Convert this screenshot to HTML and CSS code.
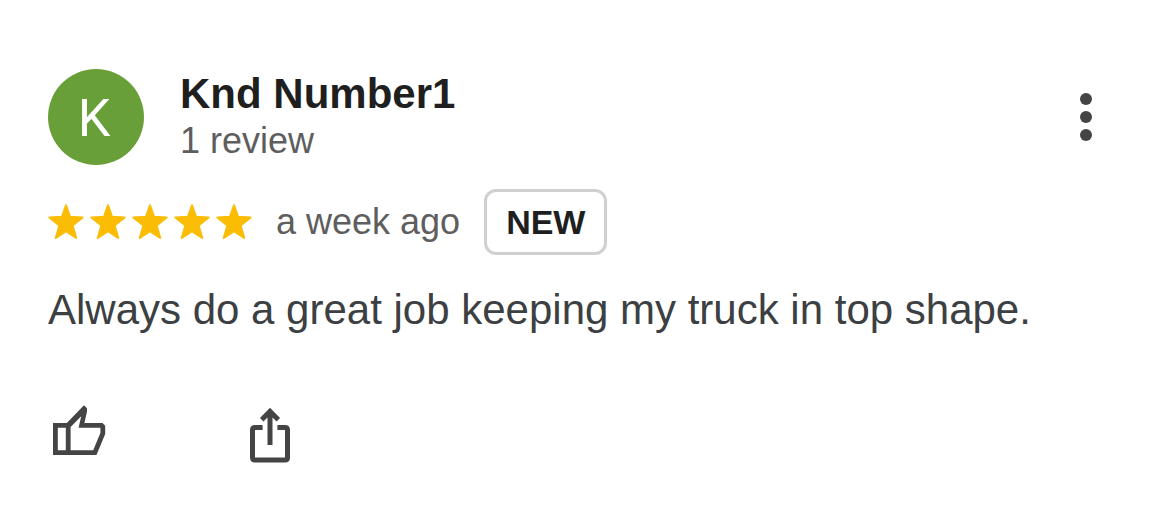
FILE: index.html
```html
<!DOCTYPE html>
<html lang="en">
<head>
<meta charset="utf-8">
<meta name="viewport" content="width=device-width, initial-scale=1">
<title>Review</title>
<link rel="stylesheet" href="styles.css">
</head>
<body>
<svg class="defs" aria-hidden="true">
  <symbol id="star" viewBox="0 0 36 36">
    <path d="M18 1.3 22 12.7 34.6 13.4 24.6 21.5 28.2 33.9 18 27.2 7.8 33.9 11.4 21.5 1.4 13.4 14 12.7Z" fill="currentColor" stroke="currentColor" stroke-width="2" stroke-linejoin="round"/>
  </symbol>
</svg>
<article class="review">
  <header class="review-header">
    <div class="avatar" aria-hidden="true">K</div>
    <div class="author">
      <h1 class="author-name">Knd Number1</h1>
      <p class="author-meta">1 review</p>
    </div>
    <button class="icon-button menu-button" type="button" aria-label="More options">
      <svg class="menu-icon" viewBox="0 0 12 48" fill="currentColor"><circle cx="6" cy="6" r="6"/><circle cx="6" cy="24" r="6"/><circle cx="6" cy="42" r="6"/></svg>
    </button>
  </header>
  <div class="rating-row">
    <div class="stars" role="img" aria-label="5 out of 5 stars">
      <svg class="star"><use href="#star"/></svg>
      <svg class="star"><use href="#star"/></svg>
      <svg class="star"><use href="#star"/></svg>
      <svg class="star"><use href="#star"/></svg>
      <svg class="star"><use href="#star"/></svg>
    </div>
    <span class="date">a week ago</span>
    <span class="badge">NEW</span>
  </div>
  <p class="review-text">Always do a great job keeping my truck in top shape.</p>
  <div class="actions">
    <button class="icon-button" type="button" aria-label="Like">
      <svg class="action-icon" viewBox="0 0 60 64"><path fill="currentColor" stroke="none" fill-rule="evenodd" d="M5 22H18.8L36 4.2 39 7.2V10.5L36.4 22H54.5L57.2 24.7V33L48.5 54H5ZM9.8 26.8V49.2H17.8V26.8ZM22.6 26V49.2H45.2L52.4 32V26.8H30.6L33.2 15.2Z"/></svg>
    </button>
    <button class="icon-button" type="button" aria-label="Share">
      <svg class="action-icon" viewBox="0 0 60 64"><path d="M22.6 26.5H15Q12.5 26.5 12.5 29V56.5Q12.5 59 15 59H45Q47.5 59 47.5 56.5V29Q47.5 26.5 45 26.5H37.4M30 44V11M21.7 18.7 30 10.4 38.3 18.7"/></svg>
    </button>
  </div>
</article>
</body>
</html>
```
FILE: styles.css
```css
* {
  box-sizing: border-box;
}

body {
  margin: 0;
  background: #fff;
  color: #3c4043;
  font-family: "Liberation Sans", Arial, sans-serif;
}

h1,
p {
  margin: 0;
}

.defs {
  display: none;
}

.review {
  padding: 69px 48px 48px;
}

.review-header {
  display: flex;
  align-items: center;
}

.avatar {
  display: flex;
  flex: none;
  align-items: center;
  justify-content: center;
  width: 96px;
  height: 96px;
  padding: 4px 4px 0 0;
  border-radius: 50%;
  background: #689f38;
  color: #fff;
  font-family: Roboto, sans-serif;
  font-size: 52px;
  line-height: 60px;
}

.author {
  flex: 1;
  margin-left: 36px;
}

.author-name {
  color: #1f1f1f;
  font-size: 42px;
  font-weight: 700;
  line-height: 48px;
}

.author-meta,
.date {
  color: #5e5e5e;
  font-size: 36px;
  line-height: 46px;
}

.icon-button {
  display: flex;
  padding: 0;
  border: 0;
  background: none;
  color: #444;
  cursor: pointer;
}

.menu-button {
  justify-content: center;
  width: 72px;
}

.menu-icon {
  width: 12px;
  height: 48px;
}

.rating-row {
  display: flex;
  flex-wrap: wrap;
  align-items: center;
  gap: 24px;
  margin-top: 24px;
}

.stars {
  display: flex;
  gap: 6px;
  color: #fbbc04;
}

.star {
  width: 36px;
  height: 36px;
}

.badge {
  padding: 10px 19px;
  border: 3px solid #d0d0d0;
  border-radius: 12px;
  color: #1f1f1f;
  font-size: 34px;
  font-weight: 700;
  line-height: 40px;
}

.review-text {
  margin-top: 28px;
  font-size: 42px;
  line-height: 54px;
}

.actions {
  display: flex;
  gap: 132px;
  margin-top: 64px;
}

.action-icon {
  width: 60px;
  height: 64px;
  fill: none;
  stroke: currentColor;
  stroke-width: 5;
}
```
